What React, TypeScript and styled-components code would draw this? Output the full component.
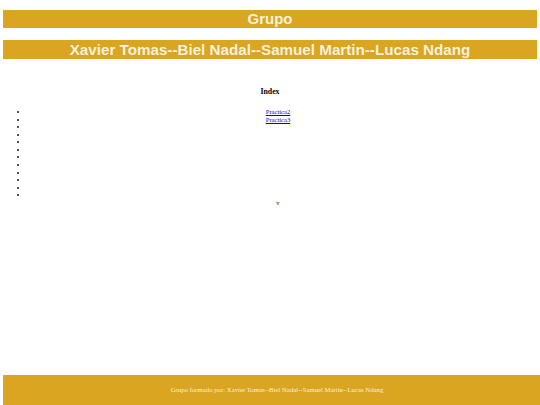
import React from "react";
import styled, { createGlobalStyle } from "styled-components";

const Global = createGlobalStyle`
  html, body { margin: 0; padding: 0; background: #ffffff; }
  body { font-family: "Liberation Serif", "Times New Roman", serif; }
`;

const Page = styled.div`
  display: flex;
  flex-direction: column;
  min-height: 100vh;
  padding-left: 3px;
  box-sizing: border-box;
`;

const Banner = styled.h1<{ $top: number; $h: number; $size: number }>`
  margin: ${(p) => p.$top}px 3px 0 0;
  height: ${(p) => p.$h}px;
  line-height: ${(p) => p.$h}px;
  background: #daa520;
  color: #f7f1dc;
  font-family: "Liberation Sans", Arial, sans-serif;
  font-weight: bold;
  font-size: ${(p) => p.$size}px;
  text-align: center;
`;

const IndexTitle = styled.h3`
  margin: 28px 3px 0 0;
  font-size: 7.8px;
  line-height: 9px;
  font-weight: bold;
  text-align: center;
  color: #000;
`;

const List = styled.ul`
  margin: 12px 3px 0 0;
  padding-left: 16px;
  font-size: 6.6px;
  line-height: 7.58px;
  list-style: none;
`;

const Item = styled.li<{ $plain?: boolean }>`
  position: relative;
  text-align: center;
  height: 7.58px;

  &::before {
    content: ${(p) => (p.$plain ? "none" : '""')};
    position: absolute;
    left: -1.8px;
    top: 3px;
    width: 2px;
    height: 2px;
    border-radius: 50%;
    background: #1a1a1a;
  }
`;

const Link = styled.a`
  color: #0000ee;
  text-decoration: underline;
`;

const Footer = styled.footer`
  margin-top: auto;
  height: 30px;
  line-height: 30px;
  background: #daa520;
  color: #f7f1dc;
  font-size: 6.75px;
  text-align: center;
  padding-left: 11px;
`;

export default function App() {
  const empties = Array.from({ length: 10 });
  return (
    <>
      <Global />
      <Page>
        <Banner $top={10} $h={18} $size={15}>Grupo</Banner>
        <Banner $top={12} $h={19} $size={15.2}>Xavier Tomas--Biel Nadal--Samuel Martin--Lucas Ndang</Banner>
        <IndexTitle>Index</IndexTitle>
        <List>
          <Item><Link href="#">Practica2</Link></Item>
          <Item><Link href="#">Practica3</Link></Item>
          {empties.map((_, i) => (
            <Item key={i} />
          ))}
          <Item $plain>v</Item>
        </List>
        <Footer>Grupo formado por: Xavier Tomas--Biel Nadal--Samuel Martin--Lucas Ndang</Footer>
      </Page>
    </>
  );
}
